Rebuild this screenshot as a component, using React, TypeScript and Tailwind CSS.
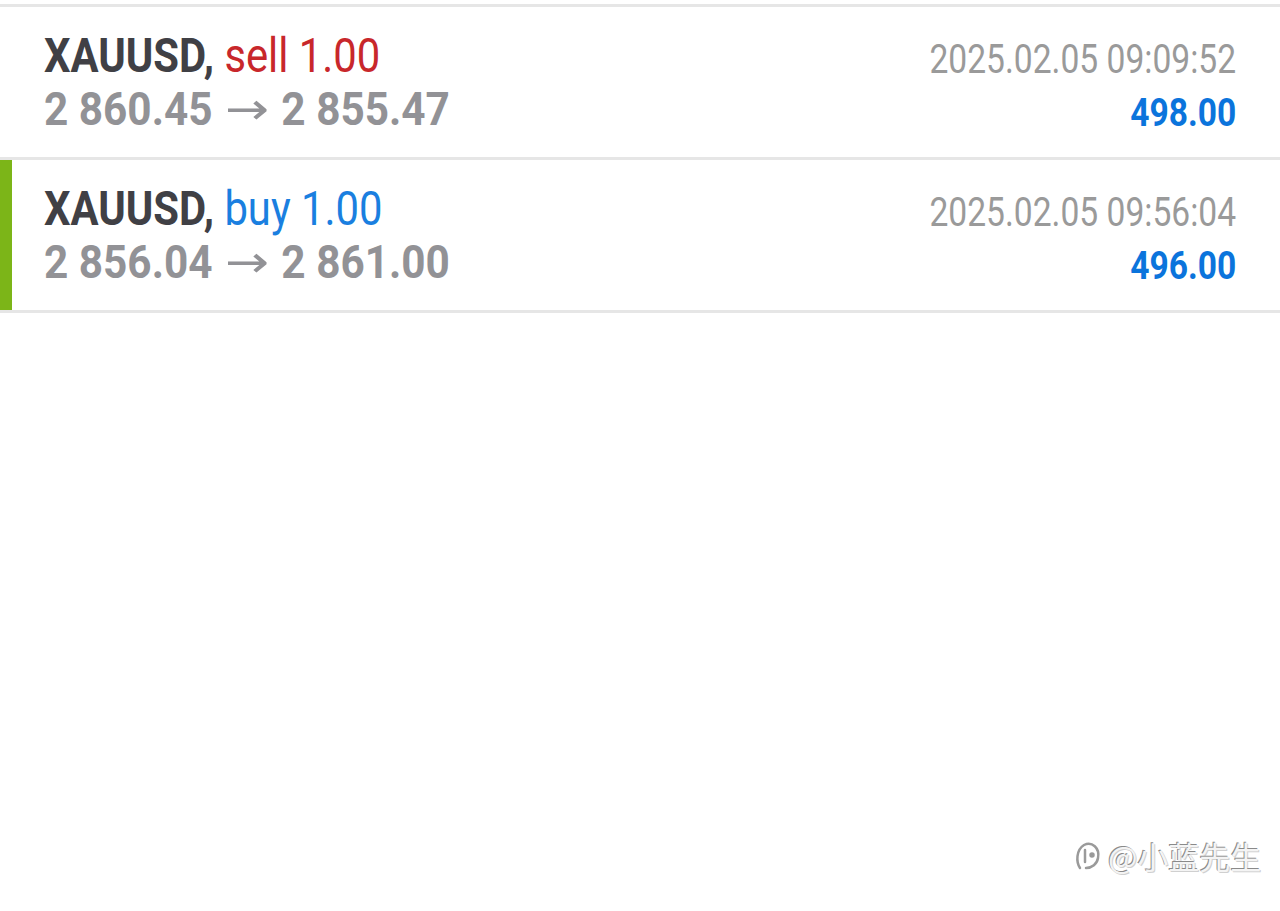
import React from "react";

const rows = [
  { side: "sell", sideCls: "text-[#c8272b]", open: "2 860.45", close: "2 855.47", time: "2025.02.05 09:09:52", profit: "498.00", accent: false },
  { side: "buy", sideCls: "text-[#1a7fe0]", open: "2 856.04", close: "2 861.00", time: "2025.02.05 09:56:04", profit: "496.00", accent: true },
];

export default function App() {
  return (
    <div className="w-[1280px] h-[911px] bg-white relative overflow-hidden" style={{ fontFamily: "Roboto, 'Noto Sans', sans-serif" }}>
      <div className="h-[4px]" />
      <div className="border-t-[3px] border-[#e6e6e6]" />
      {rows.map((r, i) => (
        <div key={i} className="flex h-[153px] border-b-[3px] border-[#e6e6e6]">
          <div className={r.accent ? "w-[12px] bg-[#7cb518]" : "w-[12px]"} />
          <div className="flex-1 flex justify-between pl-[32px] pr-[44px]">
            <div className="flex flex-col pt-[22px]">
              <div className="text-[48px] leading-[54px] whitespace-nowrap origin-left scale-x-[0.87]">
                <span className="font-bold text-[#404045]">XAUUSD,</span>{" "}
                <span className={r.sideCls}>{r.side} 1.00</span>
              </div>
              <div className="flex items-center h-[52px] text-[46px] leading-[52px] font-bold text-[#929296] whitespace-nowrap origin-left scale-x-[0.92]">
                <span>{r.open}</span>
                <span className="inline-block mx-[19px] text-[44px] leading-[44px] font-normal scale-x-[1.3]" style={{ fontFamily: "'DejaVu Sans', sans-serif" }}>→</span>
                <span>{r.close}</span>
              </div>
            </div>
            <div className="flex flex-col items-end pt-[29px]">
              <div className="text-[40px] leading-[48px] text-[#9a9a9a] whitespace-nowrap origin-right scale-x-[0.84]">{r.time}</div>
              <div className="text-[39px] leading-[58px] font-bold text-[#0b74dc] whitespace-nowrap origin-right scale-x-[0.86]">{r.profit}</div>
            </div>
          </div>
        </div>
      ))}
      <div className="absolute left-[1072px] top-[838px] flex items-center gap-[4px] text-[#b8b8b8]">
        <svg width="32" height="36" viewBox="0 0 32 36" fill="none" stroke="#9a9a9a" strokeWidth="2.5" strokeLinecap="round">
          <path d="M8 30 C4 24 4 12 12 7 C20 3 28 10 26 20 C25 26 20 30 14 30" />
          <path d="M13 12 L13 24" />
          <circle cx="20" cy="17" r="1.5" fill="#9a9a9a" />
        </svg>
        <span className="text-[31px] leading-[36px]" style={{ fontFamily: "'Noto Sans CJK SC', sans-serif", color: "#f4f4f4", textShadow: "-1px -1px 0 #8a8a8a, 1px 1px 0 #d0d0d0" }}>@小蓝先生</span>
      </div>
    </div>
  );
}
